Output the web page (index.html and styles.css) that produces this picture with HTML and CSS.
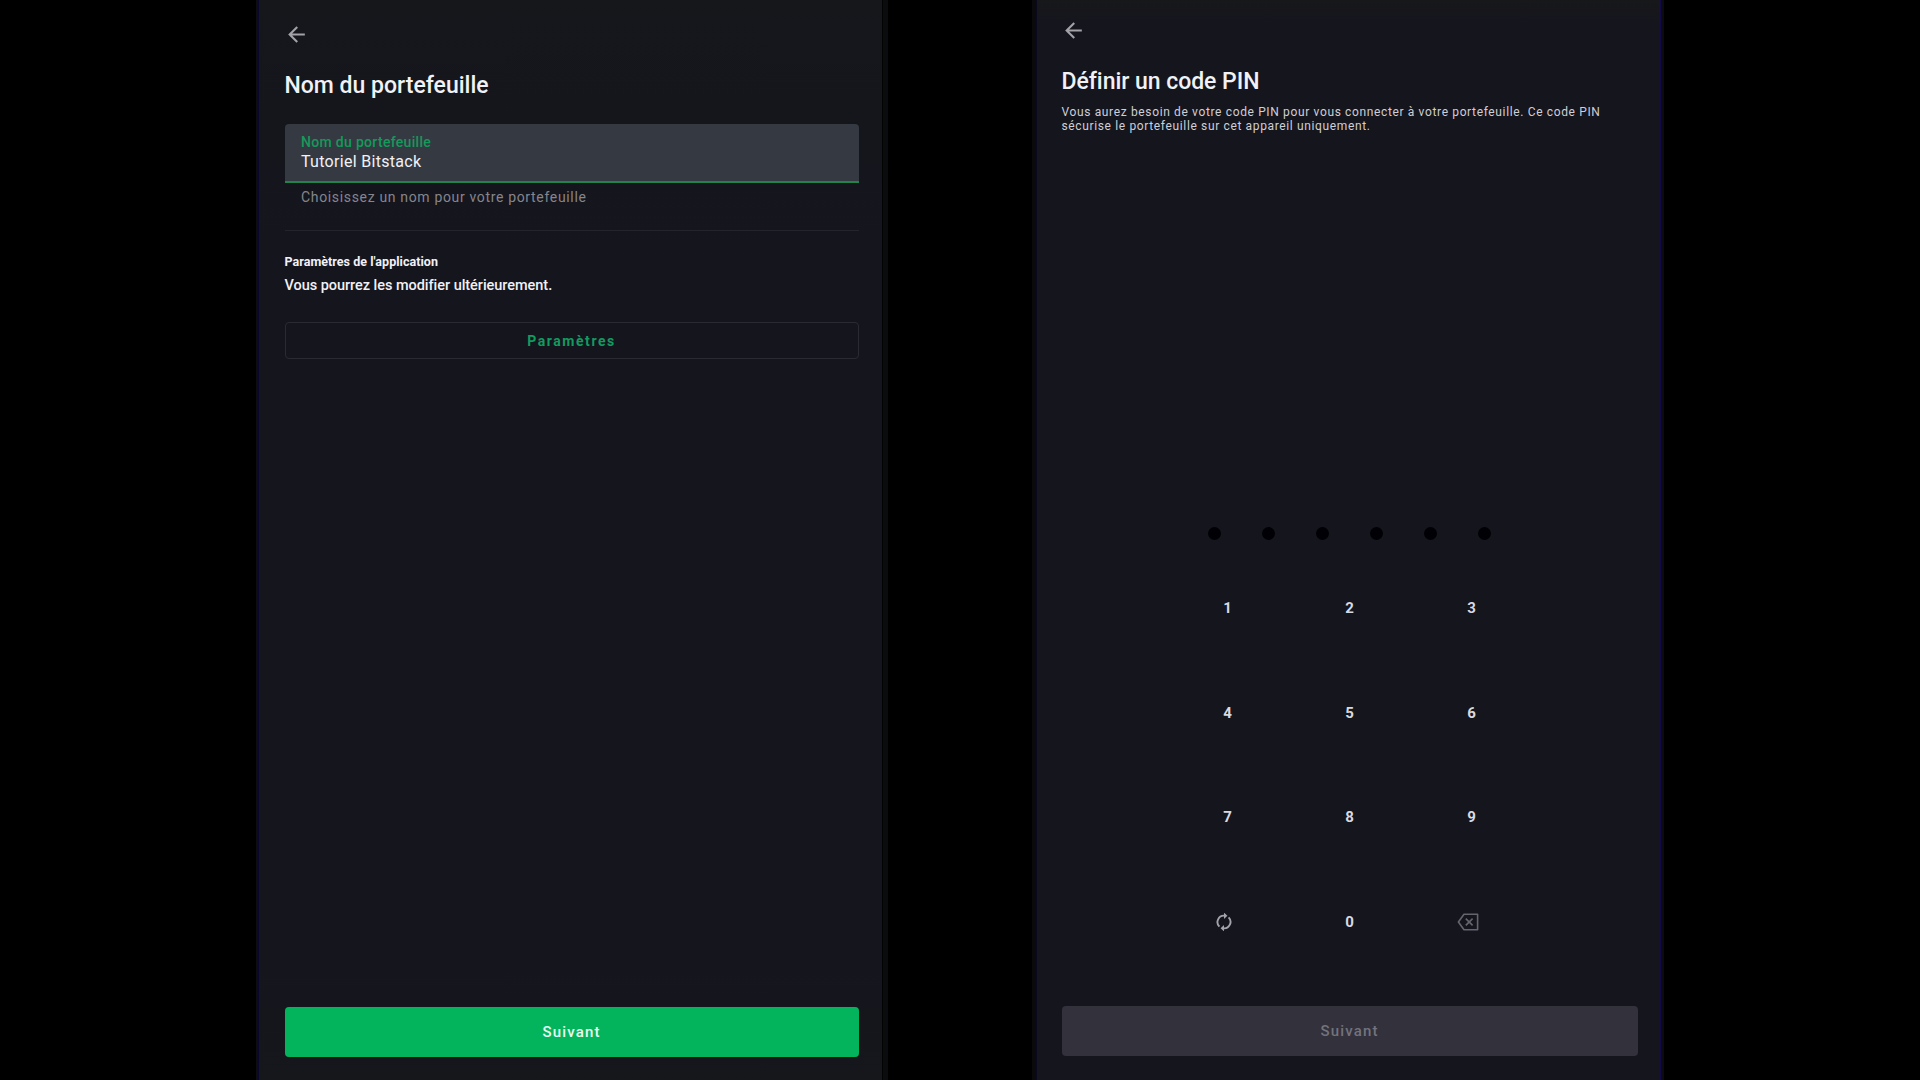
FILE: index.html
```
<!DOCTYPE html>
<html lang="fr">
<head>
<meta charset="utf-8">
<title>Portefeuille</title>
<link rel="stylesheet" href="styles.css">
</head>
<body>
<main class="stage">
  <section class="screen screen-name">
    <button class="back" aria-label="Retour"><svg viewBox="0 0 24 24"><path d="M20 11H7.83l5.59-5.59L12 4l-8 8 8 8 1.41-1.41L7.83 13H20v-2z"/></svg></button>
    <h1 class="title">Nom du portefeuille</h1>
    <div class="field">
      <span class="field-label">Nom du portefeuille</span>
      <span class="field-value">Tutoriel Bitstack</span>
    </div>
    <p class="helper">Choisissez un nom pour votre portefeuille</p>
    <hr class="divider">
    <h2 class="section-title">Paramètres de l'application</h2>
    <p class="section-text">Vous pourrez les modifier ultérieurement.</p>
    <button class="outline-button">Paramètres</button>
    <button class="next-button">Suivant</button>
  </section>

  <section class="screen screen-pin">
    <button class="back" aria-label="Retour"><svg viewBox="0 0 24 24"><path d="M20 11H7.83l5.59-5.59L12 4l-8 8 8 8 1.41-1.41L7.83 13H20v-2z"/></svg></button>
    <h1 class="title">Définir un code PIN</h1>
    <p class="description">Vous aurez besoin de votre code PIN pour vous connecter à votre portefeuille. Ce code PIN<br>sécurise le portefeuille sur cet appareil uniquement.</p>
    <div class="dots"><i></i><i></i><i></i><i></i><i></i><i></i></div>
    <div class="keypad">
      <span>1</span><span>2</span><span>3</span>
      <span>4</span><span>5</span><span>6</span>
      <span>7</span><span>8</span><span>9</span>
      <span class="key-refresh"><svg viewBox="0 0 16 18" width="16" height="18"><g fill="none" stroke="#a3a3ac" stroke-width="1.9"><path d="M3.4 13.6A6.4 6.4 0 0 1 8.6 2.7M12.6 4.4A6.4 6.4 0 0 1 7.4 15.3"/></g><path fill="#a3a3ac" d="M8 -.4l3.4 3.1L8 5.9zM8 18.4l-3.4-3.1L8 12.1z"/></svg></span>
      <span>0</span>
      <span class="key-delete"><svg viewBox="0 0 22 18" width="22" height="18" fill="none" stroke="#65656e" stroke-width="1.6"><path d="M7 1.2H20.6V16.8H7L1.4 9z" stroke-linejoin="round"/><path d="M8.8 5.6l6.8 6.8M15.6 5.6l-6.8 6.8"/></svg></span>
    </div>
    <button class="next-button disabled" disabled>Suivant</button>
  </section>
</main>
</body>
</html>
```
FILE: styles.css
```
* { box-sizing: border-box; }

body {
  margin: 0;
  background: #000;
  font-family: Roboto, sans-serif;
  color: #f1f1f6;
}

h1, h2, p { margin: 0; }

button {
  display: block;
  border: 0;
  margin: 0;
  padding: 0;
  background: none;
  font-family: inherit;
}

.stage {
  display: flex;
  gap: 144px;
  width: 1920px;
  height: 1080px;
  padding-left: 256px;
  overflow: hidden;
}

.screen {
  display: flex;
  flex-direction: column;
  height: 1080px;
  background: #15151e;
}

.screen-name {
  width: 632px;
  padding: 22px 24.5px 23.5px 26.5px;
  border-left: 2px solid #0d0d10;
  border-right: 5px solid #0b0c0d;
  background: linear-gradient(#15171b, #15151e 260px, #15151e 960px, #15171b);
  box-shadow: inset 1px 0 #08062c, inset -1px 0 #030304;
}

.screen-pin {
  width: 632px;
  padding: 18px 23.5px 24.5px 25.5px;
  border-left: 4px solid #0a0a0c;
  border-right: 3px solid #0b0b10;
  background: linear-gradient(#17181a, #15151e 24px);
  box-shadow: inset 1px 0 #09081c, inset -1px 0 #120a48;
}

.back { width: 25px; height: 25px; margin-left: -0.5px; }
.back svg { display: block; width: 25px; height: 25px; fill: #a2a2a8; }

.title {
  margin-top: 25px;
  font-size: 23px;
  line-height: 28px;
  font-weight: 500;
}

.screen-pin .title { letter-spacing: -0.04px; }

.field {
  display: flex;
  flex-direction: column;
  height: 59px;
  margin-top: 24px;
  padding: 9px 16.5px 0;
  border-bottom: 2px solid #20854b;
  border-radius: 4px 4px 0 0;
  background: #353a42;
}

.field-label {
  color: #14995b;
  font-size: 14px;
  line-height: 18px;
  font-weight: 500;
  letter-spacing: 0.31px;
}

.field-value {
  font-size: 16px;
  line-height: 21px;
  letter-spacing: 0.3px;
}

.helper {
  margin: 5px 0 0 16.5px;
  color: #85858d;
  font-size: 14px;
  line-height: 18px;
  letter-spacing: 0.66px;
}

.divider {
  width: 100%;
  height: 1px;
  margin: 24px 0 0;
  border: 0;
  background: #24242d;
}

.section-title {
  margin-top: 23px;
  font-size: 12.5px;
  line-height: 16px;
  font-weight: 700;
  letter-spacing: 0.04px;
}

.section-text {
  margin-top: 6px;
  font-size: 14.5px;
  line-height: 20px;
  font-weight: 500;
  letter-spacing: -0.04px;
}

.outline-button {
  height: 37px;
  margin-top: 26px;
  border: 1.5px solid #2a2a33;
  border-radius: 4px;
  color: #139a60;
  font-size: 14px;
  font-weight: 700;
  letter-spacing: 1.57px;
}

.next-button {
  height: 50px;
  margin-top: auto;
  padding-top: 1px;
  border-radius: 4px;
  background: #04b45c;
  color: #e9fbf1;
  font-size: 15px;
  font-weight: 500;
  letter-spacing: 1.16px;
}

.next-button.disabled {
  background: #32313c;
  color: #73737d;
}

.description {
  margin-top: 9px;
  color: #cfcfd6;
  font-size: 12px;
  line-height: 14px;
  letter-spacing: 0.64px;
  white-space: nowrap;
}

.dots {
  display: flex;
  align-self: center;
  gap: 41px;
  margin-top: 393.5px;
}

.dots i {
  width: 13px;
  height: 13px;
  border-radius: 50%;
  background: #000005;
}

.keypad {
  display: grid;
  grid-template-columns: repeat(3, 122px);
  grid-auto-rows: 104.5px;
  align-self: center;
  margin-top: 16.5px;
}

.keypad span {
  display: flex;
  align-items: center;
  justify-content: center;
  color: #d9d9e0;
  font-size: 15px;
  font-weight: 700;
}

.keypad .key-refresh { padding-right: 8px; }
.keypad .key-delete { padding-right: 8px; }
```
